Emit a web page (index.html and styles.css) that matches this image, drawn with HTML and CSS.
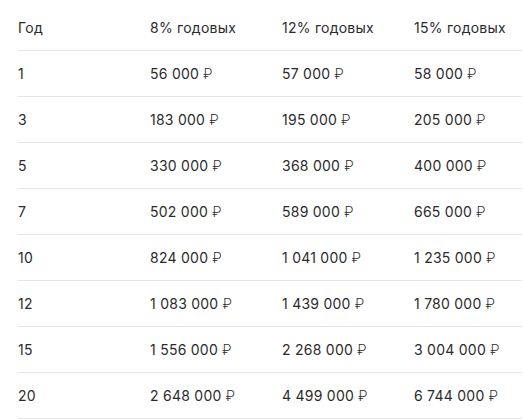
FILE: index.html
```html
<!DOCTYPE html>
<html lang="ru">
<head>
<meta charset="utf-8">
<link rel="stylesheet" href="styles.css">
</head>
<body>
<table class="rates">
  <thead>
    <tr><th>Год</th><th>8% годовых</th><th>12% годовых</th><th>15% годовых</th></tr>
  </thead>
  <tbody>
    <tr><td>1</td><td>56 000 <span class="cur">₽</span></td><td>57 000 <span class="cur">₽</span></td><td>58 000 <span class="cur">₽</span></td></tr>
    <tr><td>3</td><td>183 000 <span class="cur">₽</span></td><td>195 000 <span class="cur">₽</span></td><td>205 000 <span class="cur">₽</span></td></tr>
    <tr><td>5</td><td>330 000 <span class="cur">₽</span></td><td>368 000 <span class="cur">₽</span></td><td>400 000 <span class="cur">₽</span></td></tr>
    <tr><td>7</td><td>502 000 <span class="cur">₽</span></td><td>589 000 <span class="cur">₽</span></td><td>665 000 <span class="cur">₽</span></td></tr>
    <tr><td>10</td><td>824 000 <span class="cur">₽</span></td><td>1 041 000 <span class="cur">₽</span></td><td>1 235 000 <span class="cur">₽</span></td></tr>
    <tr><td>12</td><td>1 083 000 <span class="cur">₽</span></td><td>1 439 000 <span class="cur">₽</span></td><td>1 780 000 <span class="cur">₽</span></td></tr>
    <tr><td>15</td><td>1 556 000 <span class="cur">₽</span></td><td>2 268 000 <span class="cur">₽</span></td><td>3 004 000 <span class="cur">₽</span></td></tr>
    <tr><td>20</td><td>2 648 000 <span class="cur">₽</span></td><td>4 499 000 <span class="cur">₽</span></td><td>6 744 000 <span class="cur">₽</span></td></tr>
  </tbody>
</table>
</body>
</html>
```
FILE: styles.css
```css
html, body {
  margin: 0;
  padding: 0;
  background: #fff;
}
body {
  padding: 5px 1px 0 18px;
  font-family: Inter, "Noto Sans", sans-serif;
  font-size: 14px;
  letter-spacing: 0.25px;
  color: #2b2b2b;
}
.rates {
  width: 504px;
  border-collapse: collapse;
  table-layout: fixed;
}
.rates th, .rates td {
  padding: 0;
  height: 45px;
  text-align: left;
  vertical-align: middle;
  font-weight: 400;
  border-bottom: 1px solid #e5e5e5;
  white-space: nowrap;
}
.rates th:nth-child(-n+3), .rates td:nth-child(-n+3) {
  width: 132px;
}
.cur {
  font-family: Roboto, "Noto Sans", sans-serif;
  font-weight: 300;
}
```
